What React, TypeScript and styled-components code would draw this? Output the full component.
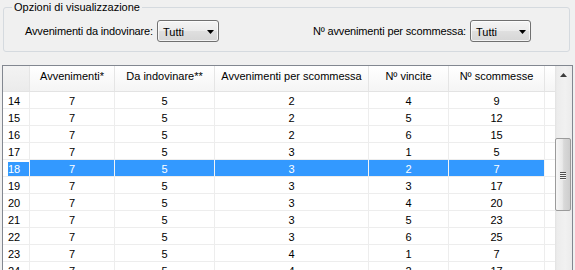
import React from 'react';
import styled, { createGlobalStyle } from 'styled-components';

const GlobalStyle = createGlobalStyle`
  html, body {
    margin: 0;
    padding: 0;
    overflow: hidden;
    background: #f0f0f0;
  }
  body {
    font-family: "Liberation Sans", Arial, sans-serif;
    font-size: 11px;
    color: #000;
  }
`;

const columns = '27px 85px 100px 154px 80px 96px 1fr';

const Window = styled.div`
  width: 575px;
  height: 270px;
  overflow: hidden;
`;

const GroupBox = styled.fieldset`
  margin: 0 5px 0 3px;
  padding: 0;
  border: 1px solid #d5dadf;
  border-radius: 3px;
  min-width: 0;
`;

const GroupLegend = styled.legend`
  margin-left: 8px;
  padding: 0 2px;
  line-height: 14px;
`;

const FilterRow = styled.div`
  display: flex;
  justify-content: space-between;
  align-items: center;
  padding: 6px 38px 9px 21px;
`;

const Field = styled.label`
  display: flex;
  align-items: center;
  gap: 4px;
  line-height: 14px;
  letter-spacing: -0.15px;
`;

const Combo = styled.div<{ $width: number }>`
  box-sizing: border-box;
  width: ${(p) => p.$width}px;
  height: 22px;
  display: flex;
  align-items: center;
  justify-content: space-between;
  padding: 1px 4px 0 5px;
  border: 1px solid #707070;
  border-radius: 3px;
  background: linear-gradient(#f4f4f4, #ebebeb 50%, #dfdfdf 51%, #d6d6d6);
  box-shadow: inset 0 0 0 1px rgba(255, 255, 255, 0.7);
  line-height: 14px;
  letter-spacing: 0;
`;

const Grid = styled.div`
  margin: 13px 2px 0 2px;
  height: 215px;
  border: 1px solid #828790;
  display: flex;
  background: #fff;
  overflow: hidden;
`;

const Table = styled.div`
  flex: 1;
  min-width: 0;
`;

const HeaderRow = styled.div`
  display: grid;
  grid-template-columns: ${columns};
  height: 26px;
  box-sizing: border-box;
  border-bottom: 1px solid #e3e3e3;
  background: linear-gradient(#ffffff, #f5f5f5);
`;

const HeaderCell = styled.div<{ $corner?: boolean; $last?: boolean }>`
  box-sizing: border-box;
  padding-top: 3px;
  line-height: 15px;
  text-align: center;
  white-space: nowrap;
  overflow: hidden;
  border-right: ${(p) => (p.$last ? 'none' : '1px solid #e5e5e5')};
  background: ${(p) => (p.$corner ? 'linear-gradient(#f3f3f3, #ebebeb)' : 'transparent')};
`;

const Row = styled.div`
  display: grid;
  grid-template-columns: ${columns};
  height: 17px;
  box-sizing: border-box;
  border-bottom: 1px solid #ededed;
`;

const Cell = styled.div<{ $selected?: boolean }>`
  box-sizing: border-box;
  padding-top: 2px;
  line-height: 14px;
  text-align: center;
  border-right: 1px solid ${(p) => (p.$selected ? '#f4f4f4' : '#ededed')};
  background: ${(p) => (p.$selected ? '#3399ff' : '#fff')};
  color: ${(p) => (p.$selected ? '#fff' : '#000')};
`;

const RowHeaderCell = styled(Cell)`
  text-align: left;
  padding-left: 5px;
  background-clip: content-box;
`;

const FillerCell = styled.div`
  background: #fff;
`;

const ScrollBar = styled.div`
  width: 17px;
  display: flex;
  flex-direction: column;
  background: linear-gradient(to right, #e2e2e2, #ececec 2px, #f1f1f1 60%, #ebebeb);
`;

const ScrollButton = styled.div`
  height: 17px;
  display: flex;
  align-items: center;
  justify-content: center;
`;

const Thumb = styled.div`
  margin: 55px 1px 0 0;
  height: 73px;
  box-sizing: border-box;
  border: 1px solid #9b9b9b;
  border-radius: 2px;
  background: linear-gradient(to right, #f6f6f6, #e9e9e9 45%, #d9d9d9 55%, #cdcdcd);
  display: flex;
  align-items: center;
  justify-content: center;
`;

const Grip = styled.div`
  width: 6px;
  height: 8px;
  margin-top: 3px;
  background: repeating-linear-gradient(#4f4f4f 0, #4f4f4f 1px, #f4f4f4 1px, #f4f4f4 2px);
`;

const DownArrow = () => (
  <svg width="7" height="4" viewBox="0 0 7 4">
    <path d="M0 0H7L3.5 4Z" fill="#000" />
  </svg>
);

const UpArrow = () => (
  <svg width="7" height="4" viewBox="0 0 7 4">
    <path d="M0 4H7L3.5 0Z" fill="#3c3c3c" />
  </svg>
);

const headers = [
  'Avvenimenti*',
  'Da indovinare**',
  'Avvenimenti per scommessa',
  'Nº vincite',
  'Nº scommesse',
];

const rows = [
  [14, 7, 5, 2, 4, 9],
  [15, 7, 5, 2, 5, 12],
  [16, 7, 5, 2, 6, 15],
  [17, 7, 5, 3, 1, 5],
  [18, 7, 5, 3, 2, 7],
  [19, 7, 5, 3, 3, 17],
  [20, 7, 5, 3, 4, 20],
  [21, 7, 5, 3, 5, 23],
  [22, 7, 5, 3, 6, 25],
  [23, 7, 5, 4, 1, 7],
  [24, 7, 5, 4, 2, 17],
];

const selectedRow = 18;

const App = () => {
  return (
    <Window>
      <GlobalStyle />
      <GroupBox>
        <GroupLegend>Opzioni di visualizzazione</GroupLegend>
        <FilterRow>
          <Field>
            Avvenimenti da indovinare:
            <Combo $width={62}>
              Tutti
              <DownArrow />
            </Combo>
          </Field>
          <Field>
            Nº avvenimenti per scommessa:
            <Combo $width={61}>
              Tutti
              <DownArrow />
            </Combo>
          </Field>
        </FilterRow>
      </GroupBox>
      <Grid>
        <Table>
          <HeaderRow>
            <HeaderCell $corner />
            {headers.map((h) => (
              <HeaderCell key={h}>{h}</HeaderCell>
            ))}
            <HeaderCell $last />
          </HeaderRow>
          {rows.map(([id, ...values]) => {
            const selected = id === selectedRow;
            return (
              <Row key={id}>
                <RowHeaderCell $selected={selected}>{id}</RowHeaderCell>
                {values.map((v, i) => (
                  <Cell key={i} $selected={selected}>
                    {v}
                  </Cell>
                ))}
                <FillerCell />
              </Row>
            );
          })}
        </Table>
        <ScrollBar>
          <ScrollButton>
            <UpArrow />
          </ScrollButton>
          <Thumb>
            <Grip />
          </Thumb>
        </ScrollBar>
      </Grid>
    </Window>
  );
};

export default App;
